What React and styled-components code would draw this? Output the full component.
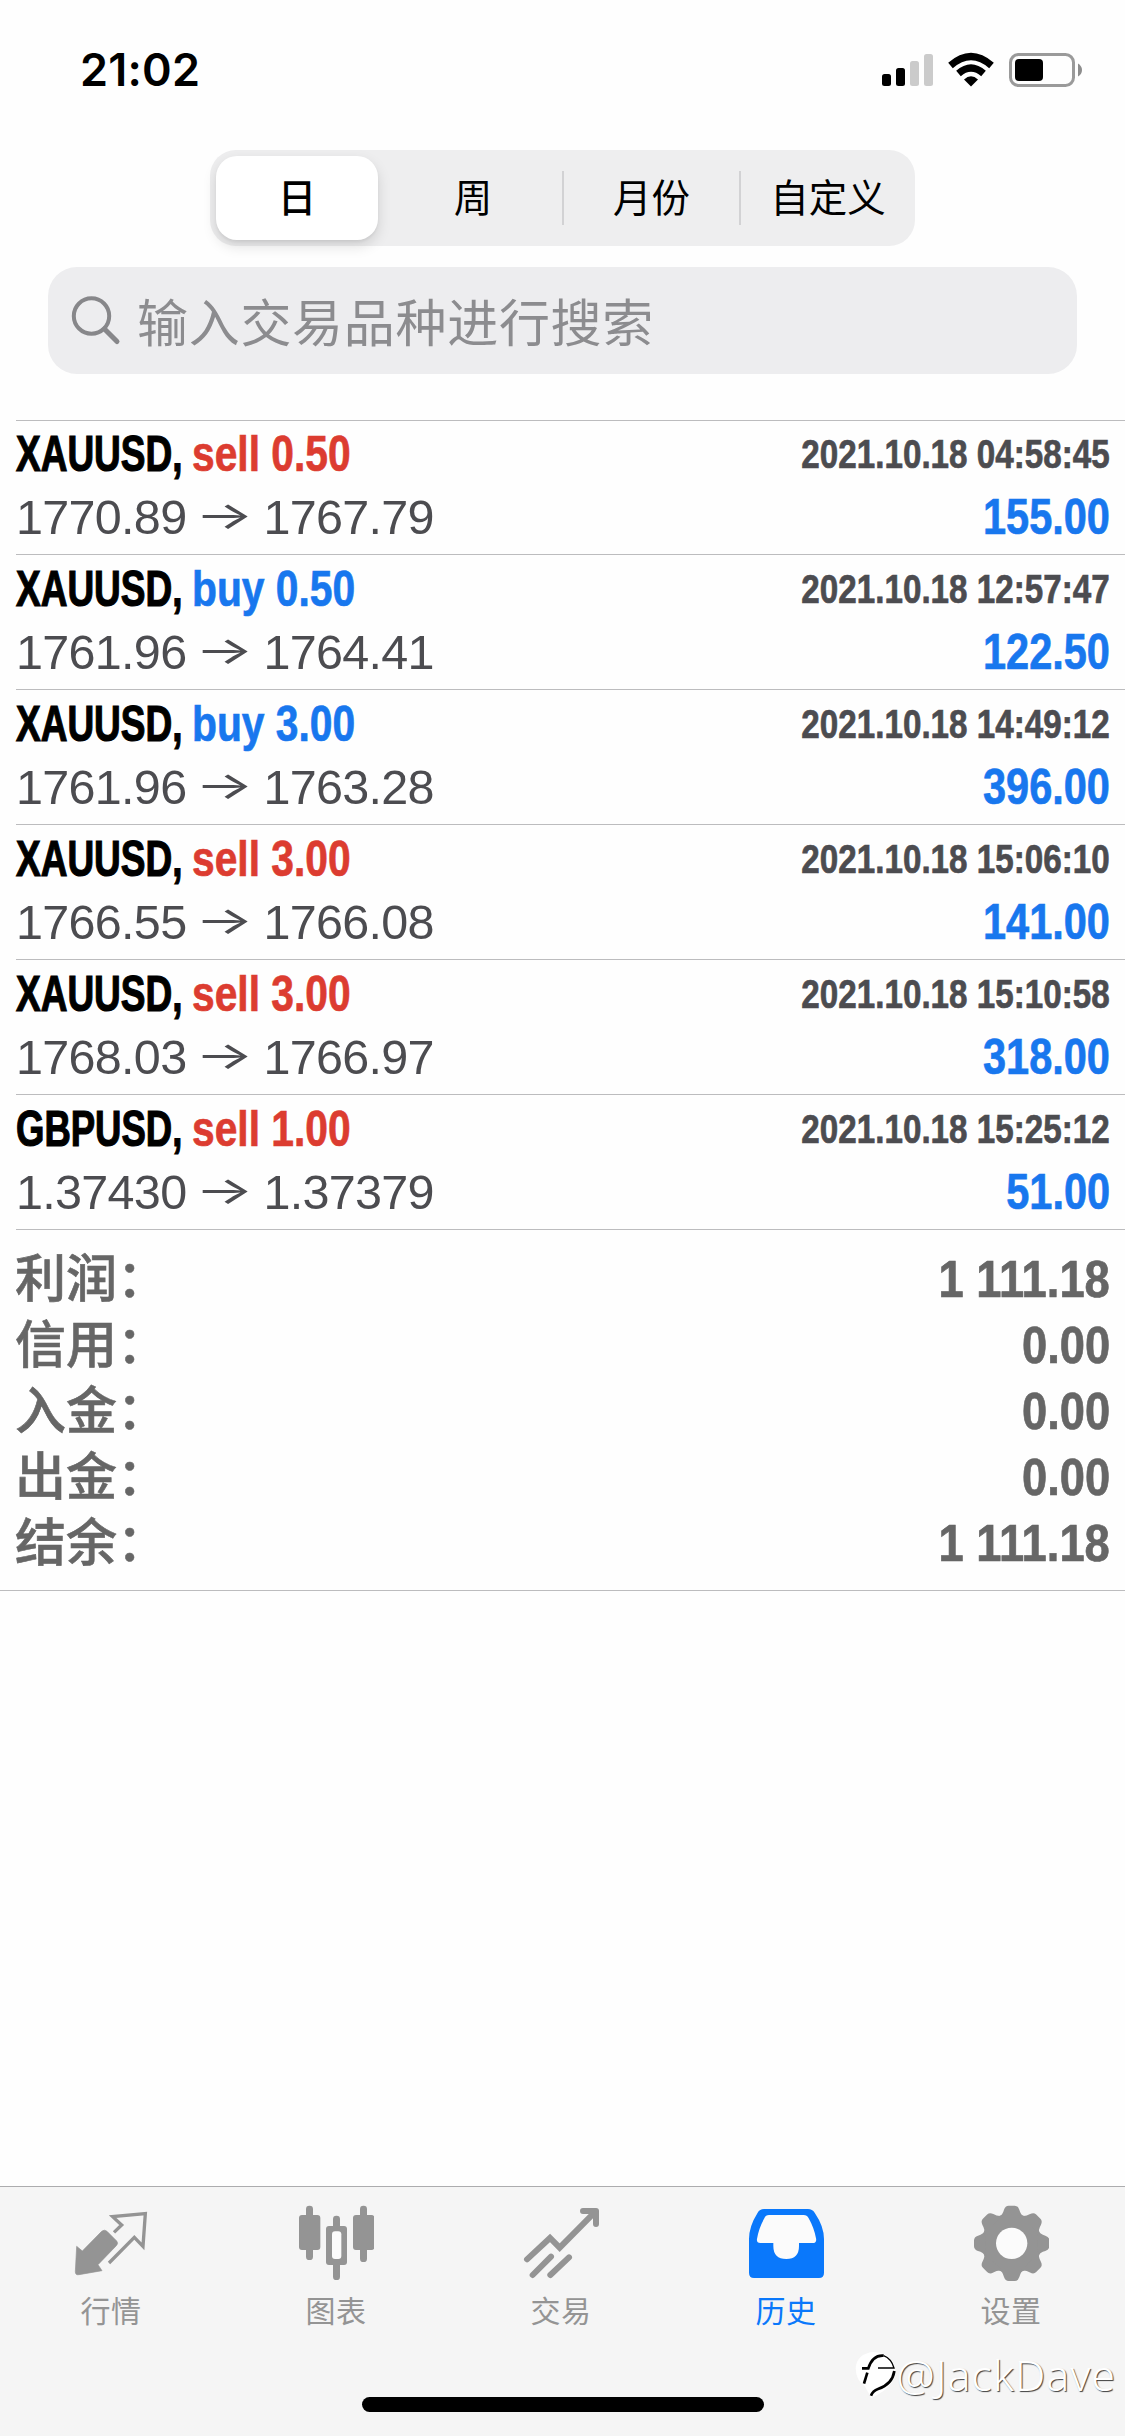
import React from "react";
import styled, { createGlobalStyle } from "styled-components";

const SANS = '"Liberation Sans", "Noto Sans CJK SC", sans-serif';
const CJK = '"Noto Sans CJK SC", "Liberation Sans", sans-serif';

const GlobalStyle = createGlobalStyle`
  * { box-sizing: border-box; }
  html, body { margin: 0; padding: 0; background: #fefefe; }
`;

const Screen = styled.div`
  position: relative;
  display: flex;
  flex-direction: column;
  width: 1125px;
  height: 2436px;
  overflow: hidden;
  background: #fefefe;
  font-family: ${SANS};
`;

const StatusBar = styled.header`
  display: flex;
  justify-content: space-between;
  height: 150px;
  padding: 52px 42px 0 80px;
`;

const Clock = styled.div`
  height: 34px;
  font: 600 45px/35px Inter, sans-serif;
  letter-spacing: 0.2px;
  color: #000;
`;

const Segments = styled.nav`
  display: grid;
  grid-template-columns: 174px 180px 177px 1fr;
  align-items: center;
  width: 705px;
  height: 96px;
  margin: 0 auto;
  border-radius: 26px;
  background: #eeeeef;
`;

const Segment = styled.button`
  height: ${(p) => (p.$active ? 84 : 54)}px;
  margin: ${(p) => (p.$active ? "0 6px 0 6px" : "0")};
  padding: 0 0 5px;
  border: 0;
  border-right: ${(p) => (p.$divider ? "2px solid #d2d2d4" : "0")};
  border-radius: ${(p) => (p.$active ? 21 : 0)}px;
  background: ${(p) => (p.$active ? "#fff" : "transparent")};
  box-shadow: ${(p) => (p.$active ? "0 6px 14px rgba(0,0,0,.13), 0 2px 3px rgba(0,0,0,.05)" : "none")};
  font: ${(p) => (p.$active ? 500 : 400)} 38.5px/49px ${CJK};
  color: #000;
`;

const SearchField = styled.div`
  display: flex;
  align-items: center;
  gap: 16px;
  width: 1029px;
  height: 107px;
  margin: 21px 0 46px 48px;
  padding: 0 0 0 23px;
  border-radius: 29px;
  background: #ededef;
`;

const Placeholder = styled.span`
  font: 400 51px/105px ${CJK};
  letter-spacing: 0.7px;
  color: #8c8c8f;
`;

const DealList = styled.main`
  display: flex;
  flex-direction: column;
  margin-left: 16px;
`;

const Deal = styled.article`
  height: 135px;
  padding: 2px 15px 0 0;
  border-bottom: 1px solid #bcbcbe;
  &:first-child {
    padding-top: 1px;
    border-top: 1px solid #bcbcbe;
  }
`;

const Line = styled.div`
  display: flex;
  height: ${(p) => p.$height}px;
  line-height: ${(p) => p.$height}px;
  white-space: pre;
`;

const Condensed = styled.span`
  display: block;
  flex: none;
  font-size: ${(p) => p.$size || 50}px;
  font-weight: 700;
  color: ${(p) => p.$color};
  -webkit-text-stroke: ${(p) => p.$heavy || 0.7}px currentColor;
  transform: scaleX(${(p) => p.$scale});
  transform-origin: ${(p) => (p.$right ? "right" : "left")} center;
  margin-left: ${(p) => (p.$right ? "auto" : "0")};
`;

const SymbolCell = styled.div`
  display: flex;
  flex: none;
  width: 176px;
`;

const SideCell = styled.div`
  display: flex;
  flex: none;
  width: 200px;
`;

const Prices = styled.span`
  display: flex;
  font-size: 48.5px;
  color: #4c4c50;
  letter-spacing: -0.7px;
`;

const Arrow = styled.span`
  width: 77px;
  height: 57px;
  line-height: 57px;
  text-align: center;
  font-family: Inter, sans-serif;
  font-size: 38px;
  letter-spacing: 0;
  transform: scaleX(1.62);
`;

const Summary = styled.section`
  height: 361px;
  padding: 16px 15px 0 15px;
  border-bottom: 1px solid #bcbcbe;
`;

const SummaryRow = styled.div`
  display: flex;
  height: 66px;
  line-height: 66px;
  white-space: pre;
`;

const SummaryLabel = styled.span`
  height: 66px;
  line-height: 67px;
  font-size: 51px;
  font-weight: 500;
  -webkit-text-stroke: 0.6px currentColor;
  color: #666;
`;

const TabBar = styled.nav`
  display: grid;
  grid-template-columns: repeat(5, 225px);
  height: 250px;
  margin-top: auto;
  padding-top: 18px;
  border-top: 1px solid #acacae;
  background: #f5f5f5;
`;

const Tab = styled.div`
  display: flex;
  flex-direction: column;
  align-items: center;
  padding-right: 3px;
  color: ${(p) => (p.$active ? "#0a78fb" : "#949494")};
  font: 400 30px/44px ${CJK};
  letter-spacing: 0.6px;
`;

const TabLabel = styled.span`
  margin-top: 6px;
`;

const HomeIndicator = styled.div`
  position: absolute;
  left: 362px;
  bottom: 24px;
  width: 402px;
  height: 15px;
  border-radius: 8px;
  background: #000;
`;

const Watermark = styled.div`
  position: absolute;
  right: 9px;
  bottom: 35px;
  display: flex;
  align-items: center;
  gap: 1px;
  font: 300 43px/52px "Noto Sans", sans-serif;
  letter-spacing: 0.9px;
  color: #fff;
  text-shadow: 1px 1px 1px rgba(0, 0, 0, 0.75);
`;

const StatusIcons = () => (
  <svg width="202" height="36" viewBox="881 51 202 36">
    <g fill="#000">
      <rect x="882" y="73" width="9" height="12" rx="2.5" />
      <rect x="896" y="67" width="9" height="18" rx="2.5" />
    </g>
    <g fill="#cbcbcb">
      <rect x="910" y="60" width="9" height="25" rx="2.5" />
      <rect x="924" y="53" width="9" height="32" rx="2.5" />
    </g>
    <g fill="none" stroke="#000" strokeWidth="7">
      <path d="M950.5 64.5Q971 46.500 991.500 64.500" />
      <path d="M958.500 72.500Q971 61.500 983.500 72.500" />
    </g>
    <path d="M964 78.500Q971 72 978 78.500L971 85.500Z" fill="#000" />
    <rect x="1010.500" y="53.500" width="63" height="31" rx="8" fill="none" stroke="#9a9a9a" strokeWidth="3" />
    <rect x="1015" y="58" width="28" height="22" rx="4" fill="#000" />
    <path d="M1078 62.500Q1082 65 1082 69T1078 75.500Z" fill="#8d8d8d" />
  </svg>
);

const SearchIcon = () => (
  <svg width="50" height="50" viewBox="71 296 50 50" fill="none" stroke="#87878a" strokeWidth="4" strokeLinecap="round">
    <circle cx="91.500" cy="316" r="17.700" />
    <path d="M104.500 329L117 341.500" strokeWidth="5" />
  </svg>
);

const TabIcon = ({ x, children }) => (
  <svg width="76" height="76" viewBox={`${x} 105 228 228`} fill="currentColor">
    {children}
  </svg>
);

const QuotesIcon = () => (
  <TabIcon x={219}>
    <path
      d="M230 229L247 243L305 184Q313 177 321 184L350 213Q356 220 349 227L294 284L306 302L237 314Q226 316 226 305Z"
      stroke="currentColor"
      strokeWidth="2"
      strokeLinejoin="round"
    />
    <path
      d="M342 187L365 165L338 140L436 131L429 229L403 202L327 279"
      fill="none"
      stroke="currentColor"
      strokeWidth="10"
      strokeLinejoin="miter"
    />
  </TabIcon>
);

const ChartIcon = () => (
  <TabIcon x={894}>
    <rect x="897" y="135" width="64" height="105" rx="9" />
    <rect x="918" y="107" width="21" height="163" rx="10" />
    <rect x="1059" y="135" width="64" height="105" rx="9" />
    <rect x="1080" y="107" width="21" height="169" rx="10" />
    <rect x="999" y="137" width="21" height="193" rx="10" />
    <rect x="978" y="168" width="63" height="117" rx="9" />
    <rect x="996" y="184" width="28" height="83" rx="9" fill="#fbfbfb" />
  </TabIcon>
);

const TradeIcon = () => (
  <TabIcon x={219}>
    <g fill="none" stroke="currentColor" strokeWidth="18" strokeLinecap="round">
      <path d="M231 268L300 204L329 233L436 125" strokeLinejoin="miter" />
      <path d="M399 123H438V162" strokeLinejoin="round" />
      <path d="M248 315L303 260M301 315L357 262" />
    </g>
  </TabIcon>
);

const HistoryIcon = () => (
  <TabIcon x={894}>
    <path d="M942 117H1074Q1087 117 1094 128Q1122 169 1122 207V308Q1122 324 1107 324H912Q897 324 897 308V207Q897 169 923 128Q929 117 942 117Z" />
    <path
      d="M957 135H1061Q1071 135 1076 145Q1092 173 1098 205Q1101 219 1088 219H1047V228Q1047 267 1009 267Q970 267 970 228V219H931Q919 219 921 207Q926 175 943 145Q947 135 957 135Z"
      fill="#fbfbfb"
    />
  </TabIcon>
);

const SettingsIcon = () => (
  <TabIcon x={429}>
    <circle cx="545" cy="220" r="90" />
    {[0, 45, 90, 135, 180, 225, 270, 315].map((angle) => (
      <path
        key={angle}
        transform={`rotate(${angle} 545 220)`}
        d="M506 142Q518 135 522 119Q526 107 536 107H554Q564 107 568 119Q572 135 584 142Z"
      />
    ))}
    <circle cx="545" cy="220" r="47" fill="#fbfbfb" />
  </TabIcon>
);

const WatermarkLogo = () => (
  <svg width="42" height="48" viewBox="60 555 126 144">
    <path d="M65 607Q68 563 118 558Q176 560 184 610Q184 664 112 696L92 660Q66 644 65 607Z" fill="#fff" />
    <g fill="none" stroke="#000">
      <path d="M84 607H103Q116 566 149 569" strokeWidth="8" />
      <path d="M149 569Q172 578 180 606H132" strokeWidth="4" />
      <path d="M100 620L90 653" strokeWidth="8" />
      <path d="M181 615Q175 655 132 669Q117 674 111 689" strokeWidth="8" />
    </g>
  </svg>
);

const deals = [
  ["XAUUSD", "sell", "0.50", "2021.10.18 04:58:45", "1770.89", "1767.79", "155.00"],
  ["XAUUSD", "buy", "0.50", "2021.10.18 12:57:47", "1761.96", "1764.41", "122.50"],
  ["XAUUSD", "buy", "3.00", "2021.10.18 14:49:12", "1761.96", "1763.28", "396.00"],
  ["XAUUSD", "sell", "3.00", "2021.10.18 15:06:10", "1766.55", "1766.08", "141.00"],
  ["XAUUSD", "sell", "3.00", "2021.10.18 15:10:58", "1768.03", "1766.97", "318.00"],
  ["GBPUSD", "sell", "1.00", "2021.10.18 15:25:12", "1.37430", "1.37379", "51.00"],
];

const totals = [
  ["利润：", "1 111.18"],
  ["信用：", "0.00"],
  ["入金：", "0.00"],
  ["出金：", "0.00"],
  ["结余：", "1 111.18"],
];

const tabs = [
  ["行情", QuotesIcon],
  ["图表", ChartIcon],
  ["交易", TradeIcon],
  ["历史", HistoryIcon],
  ["设置", SettingsIcon],
];

export default function App() {
  return (
    <Screen>
      <GlobalStyle />
      <StatusBar>
        <Clock>21:02</Clock>
        <StatusIcons />
      </StatusBar>
      <Segments>
        <Segment $active>日</Segment>
        <Segment $divider>周</Segment>
        <Segment $divider>月份</Segment>
        <Segment>自定义</Segment>
      </Segments>
      <SearchField>
        <SearchIcon />
        <Placeholder>输入交易品种进行搜索</Placeholder>
      </SearchField>
      <DealList>
        {deals.map(([symbol, side, volume, time, open, close, profit]) => (
          <Deal key={time}>
            <Line $height={65}>
              <SymbolCell>
                <Condensed $scale={symbol === "GBPUSD" ? 0.73 : 0.74} $heavy={1.2} $color="#000">{symbol},</Condensed>
              </SymbolCell>
              <SideCell>
                <Condensed $scale={0.815} $color={side === "sell" ? "#dc3c30" : "#1877ee"}>
                  {side} {volume}
                </Condensed>
              </SideCell>
              <Condensed $right $size={41} $scale={0.81} $color="#4c4c50">{time}</Condensed>
            </Line>
            <Line $height={61}>
              <Prices>
                <span>{open}</span>
                <Arrow>→</Arrow>
                <span>{close}</span>
              </Prices>
              <Condensed $right $scale={0.83} $color="#1877ee">{profit}</Condensed>
            </Line>
          </Deal>
        ))}
      </DealList>
      <Summary>
        {totals.map(([label, value]) => (
          <SummaryRow key={label}>
            <SummaryLabel>{label}</SummaryLabel>
            <Condensed $right $size={51.5} $scale={0.88} $color="#666">{value}</Condensed>
          </SummaryRow>
        ))}
      </Summary>
      <TabBar>
        {tabs.map(([label, Icon]) => (
          <Tab key={label} $active={label === "历史"}>
            <Icon />
            <TabLabel>{label}</TabLabel>
          </Tab>
        ))}
      </TabBar>
      <HomeIndicator />
      <Watermark>
        <WatermarkLogo />
        <span>@JackDave</span>
      </Watermark>
    </Screen>
  );
}
